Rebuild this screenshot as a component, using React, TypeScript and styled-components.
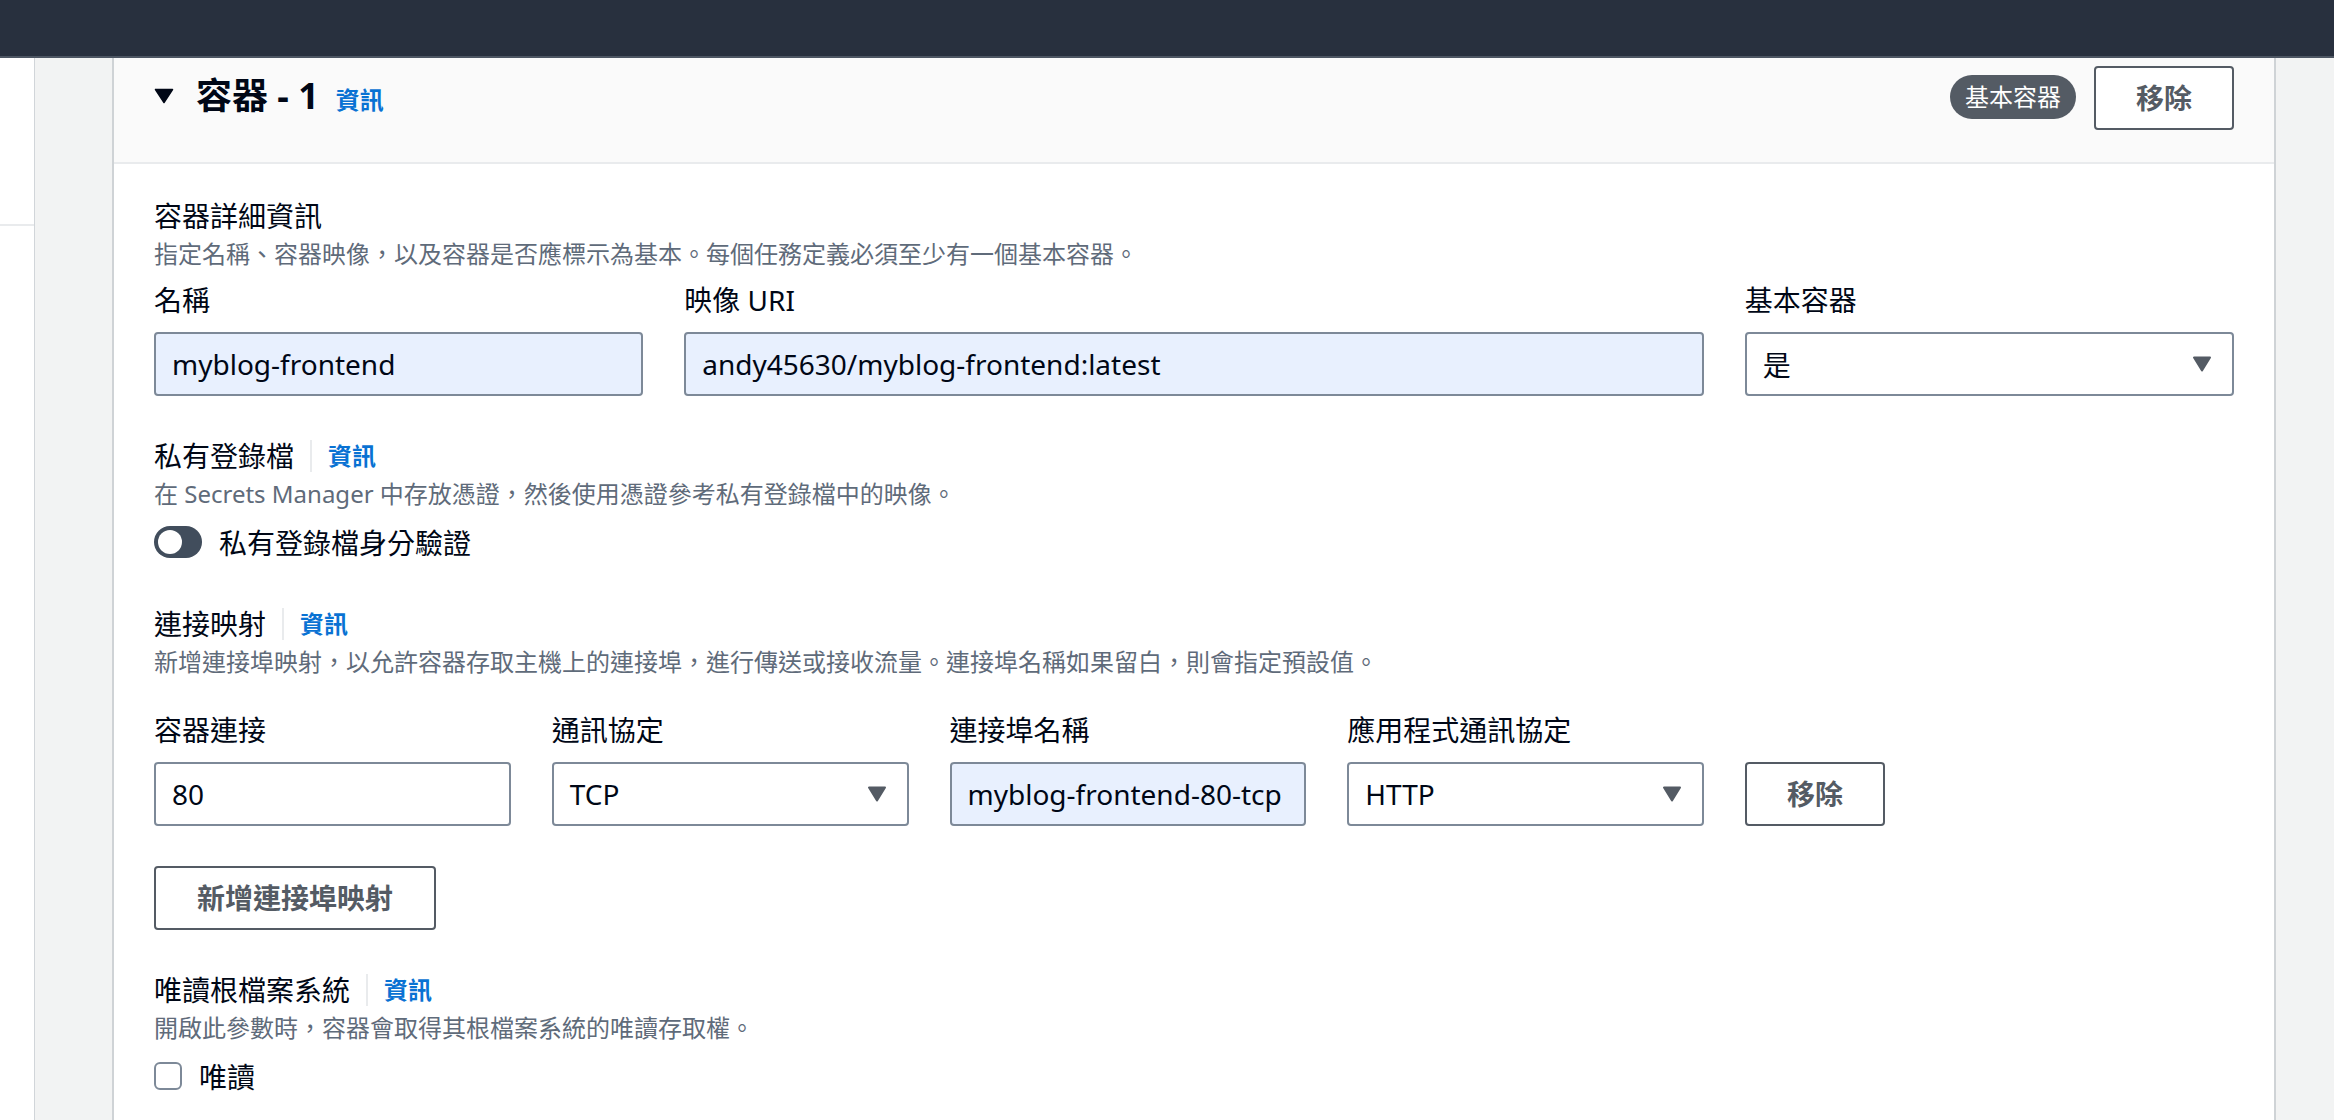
import React from "react";
import styled, { createGlobalStyle } from "styled-components";

const FONT = `"Noto Sans", "Noto Sans CJK TC", sans-serif`;

const GlobalStyle = createGlobalStyle`
  html, body { margin: 0; padding: 0; overflow: hidden; background: #ffffff; }
  body { font-family: ${FONT}; color: #000716; }
  * { box-sizing: border-box; }
`;

const TopBar = styled.header`
  height: 58px;
  background: #28303e;
  border-bottom: 2px solid #4d5663;
`;

const Shell = styled.div`
  display: flex;
  height: calc(100vh - 58px);
`;

const SideRail = styled.aside`
  width: 35px;
  flex: none;
  background: #ffffff;
  border-right: 1px solid #d1d5d9;
  padding-top: 166px;
`;

const RailDivider = styled.div`
  height: 2px;
  background: #e9ebed;
`;

const Main = styled.main`
  flex: 1;
  min-width: 0;
  background: #f2f3f3;
  padding: 0 58px 0 77px;
`;

const Panel = styled.section`
  background: #ffffff;
  border: 2px solid #cfd3d6;
  border-top: none;
  min-height: 100%;
`;

const PanelHeader = styled.div`
  display: flex;
  align-items: center;
  gap: 18px;
  padding: 8px 40px 32px 40px;
  background: #fafafa;
  border-bottom: 2px solid #e9ebed;
`;

const TitleGroup = styled.div`
  flex: 1;
  display: flex;
  align-items: center;
  margin-bottom: 4px;
`;

const Caret = styled.svg`
  width: 20px;
  height: 16px;
  margin-right: 22px;
  flex: none;
`;

const TitleLine = styled.div`
  display: flex;
  align-items: baseline;
  gap: 17px;
`;

const Title = styled.h2`
  margin: 0;
  font-size: 36px;
  line-height: 44px;
  font-weight: 700;
  color: #000716;
`;

const InfoLink = styled.a`
  font-size: 24px;
  font-weight: 700;
  color: #0972d3;
  text-decoration: none;
  line-height: 32px;
`;

const Badge = styled.span`
  height: 44px;
  line-height: 44px;
  padding: 0 15px;
  border-radius: 22px;
  background: #545b64;
  color: #ffffff;
  font-size: 24px;
  margin-bottom: 3px;
`;

const Button = styled.button<{ $padX?: number }>`
  height: 64px;
  padding: 0 ${(p) => p.$padX ?? 40}px;
  border: 2px solid #545b64;
  border-radius: 4px;
  background: #ffffff;
  color: #545b64;
  font-family: ${FONT};
  font-size: 28px;
  font-weight: 700;
  line-height: 1;
  cursor: pointer;
`;

const PanelBody = styled.div`
  padding: 32px 40px 40px 40px;
`;

const Section = styled.div<{ $gap?: number }>`
  margin-top: ${(p) => p.$gap ?? 0}px;
`;

const SectionTitle = styled.div`
  font-size: 28px;
  line-height: 40px;
  color: #000716;
`;

const LabelRow = styled.div`
  display: flex;
  align-items: center;
  height: 40px;
`;

const LabelText = styled.span`
  font-size: 28px;
  line-height: 40px;
  color: #000716;
`;

const Separator = styled.span`
  width: 2px;
  height: 32px;
  margin: 0 16px;
  background: #e9ebed;
`;

const Description = styled.div`
  margin-top: 2px;
  font-size: 24px;
  line-height: 32px;
  color: #5f6b7a;
`;

const FieldGrid = styled.div`
  display: grid;
  grid-template-columns: repeat(12, minmax(0, 1fr));
  column-gap: 41px;
  margin-top: 10px;
`;

const PortGrid = styled.div`
  display: grid;
  grid-template-columns: repeat(4, minmax(0, 1fr)) 489px;
  column-gap: 41px;
  align-items: end;
  margin-top: 32px;
`;

const Field = styled.div<{ $span?: number }>`
  grid-column: span ${(p) => p.$span ?? 1};
  display: flex;
  flex-direction: column;
  min-width: 0;
`;

const FieldLabel = styled.label`
  font-size: 28px;
  line-height: 40px;
  margin-bottom: 12px;
  color: #000716;
`;

const TextInput = styled.input<{ $filled?: boolean }>`
  width: 100%;
  height: 64px;
  padding: 0 16px;
  border: 2px solid #7d8998;
  border-radius: 4px;
  background: ${(p) => (p.$filled ? "#e8f0fe" : "#ffffff")};
  color: #000716;
  font-family: ${FONT};
  font-size: 28px;
  outline: none;
`;

const SelectBox = styled.div`
  display: flex;
  align-items: center;
  justify-content: space-between;
  height: 64px;
  padding: 0 20px 0 16px;
  border: 2px solid #7d8998;
  border-radius: 4px;
  background: #ffffff;
  font-size: 28px;
  color: #000716;
`;

const SelectArrow = styled.svg`
  width: 20px;
  height: 16px;
  flex: none;
`;

const ChoiceRow = styled.div`
  display: flex;
  align-items: center;
  gap: 17px;
  height: 40px;
  margin-top: 12px;
  font-size: 28px;
  color: #000716;
`;

const ToggleTrack = styled.span`
  display: flex;
  align-items: center;
  width: 48px;
  height: 32px;
  padding: 0 4px;
  border-radius: 16px;
  background: #414d5c;
`;

const ToggleKnob = styled.span`
  width: 24px;
  height: 24px;
  border-radius: 50%;
  background: #ffffff;
`;

const CheckBox = styled.span`
  width: 28px;
  height: 28px;
  border: 2px solid #7d8998;
  border-radius: 6px;
  background: #ffffff;
`;

const AddButtonWrap = styled.div`
  margin-top: 40px;
`;

function Select({ value }: { value: string }) {
  return (
    <SelectBox>
      <span>{value}</span>
      <SelectArrow viewBox="0 0 20 16">
        <path d="M2 1.5h16L10 14.5z" fill="#545b64" stroke="#545b64" strokeWidth="2" strokeLinejoin="round" />
      </SelectArrow>
    </SelectBox>
  );
}

function SectionLabel({ children }: { children: React.ReactNode }) {
  return (
    <LabelRow>
      <LabelText>{children}</LabelText>
      <Separator />
      <InfoLink href="#">資訊</InfoLink>
    </LabelRow>
  );
}

export default function App() {
  return (
    <>
      <GlobalStyle />
      <TopBar />
      <Shell>
        <SideRail>
          <RailDivider />
        </SideRail>
        <Main>
          <Panel>
            <PanelHeader>
              <TitleGroup>
                <Caret viewBox="0 0 20 16">
                  <path d="M1.5 1.5h17L10 14.5z" fill="#000716" stroke="#000716" strokeWidth="1.5" strokeLinejoin="round" />
                </Caret>
                <TitleLine>
                  <Title>容器 - 1</Title>
                  <InfoLink href="#">資訊</InfoLink>
                </TitleLine>
              </TitleGroup>
              <Badge>基本容器</Badge>
              <Button>移除</Button>
            </PanelHeader>

            <PanelBody>
              <Section>
                <SectionTitle>容器詳細資訊</SectionTitle>
                <Description>指定名稱、容器映像，以及容器是否應標示為基本。每個任務定義必須至少有一個基本容器。</Description>
                <FieldGrid>
                  <Field $span={3}>
                    <FieldLabel>名稱</FieldLabel>
                    <TextInput $filled readOnly value="myblog-frontend" />
                  </Field>
                  <Field $span={6}>
                    <FieldLabel>映像 URI</FieldLabel>
                    <TextInput $filled readOnly value="andy45630/myblog-frontend:latest" />
                  </Field>
                  <Field $span={3}>
                    <FieldLabel>基本容器</FieldLabel>
                    <Select value="是" />
                  </Field>
                </FieldGrid>
              </Section>

              <Section $gap={40}>
                <SectionLabel>私有登錄檔</SectionLabel>
                <Description>在 Secrets Manager 中存放憑證，然後使用憑證參考私有登錄檔中的映像。</Description>
                <ChoiceRow>
                  <ToggleTrack>
                    <ToggleKnob />
                  </ToggleTrack>
                  <span>私有登錄檔身分驗證</span>
                </ChoiceRow>
              </Section>

              <Section $gap={42}>
                <SectionLabel>連接映射</SectionLabel>
                <Description>新增連接埠映射，以允許容器存取主機上的連接埠，進行傳送或接收流量。連接埠名稱如果留白，則會指定預設值。</Description>
                <PortGrid>
                  <Field>
                    <FieldLabel>容器連接</FieldLabel>
                    <TextInput readOnly value="80" />
                  </Field>
                  <Field>
                    <FieldLabel>通訊協定</FieldLabel>
                    <Select value="TCP" />
                  </Field>
                  <Field>
                    <FieldLabel>連接埠名稱</FieldLabel>
                    <TextInput $filled readOnly value="myblog-frontend-80-tcp" />
                  </Field>
                  <Field>
                    <FieldLabel>應用程式通訊協定</FieldLabel>
                    <Select value="HTTP" />
                  </Field>
                  <div>
                    <Button>移除</Button>
                  </div>
                </PortGrid>
                <AddButtonWrap>
                  <Button $padX={41}>新增連接埠映射</Button>
                </AddButtonWrap>
              </Section>

              <Section $gap={40}>
                <SectionLabel>唯讀根檔案系統</SectionLabel>
                <Description>開啟此參數時，容器會取得其根檔案系統的唯讀存取權。</Description>
                <ChoiceRow>
                  <CheckBox />
                  <span>唯讀</span>
                </ChoiceRow>
              </Section>
            </PanelBody>
          </Panel>
        </Main>
      </Shell>
    </>
  );
}
